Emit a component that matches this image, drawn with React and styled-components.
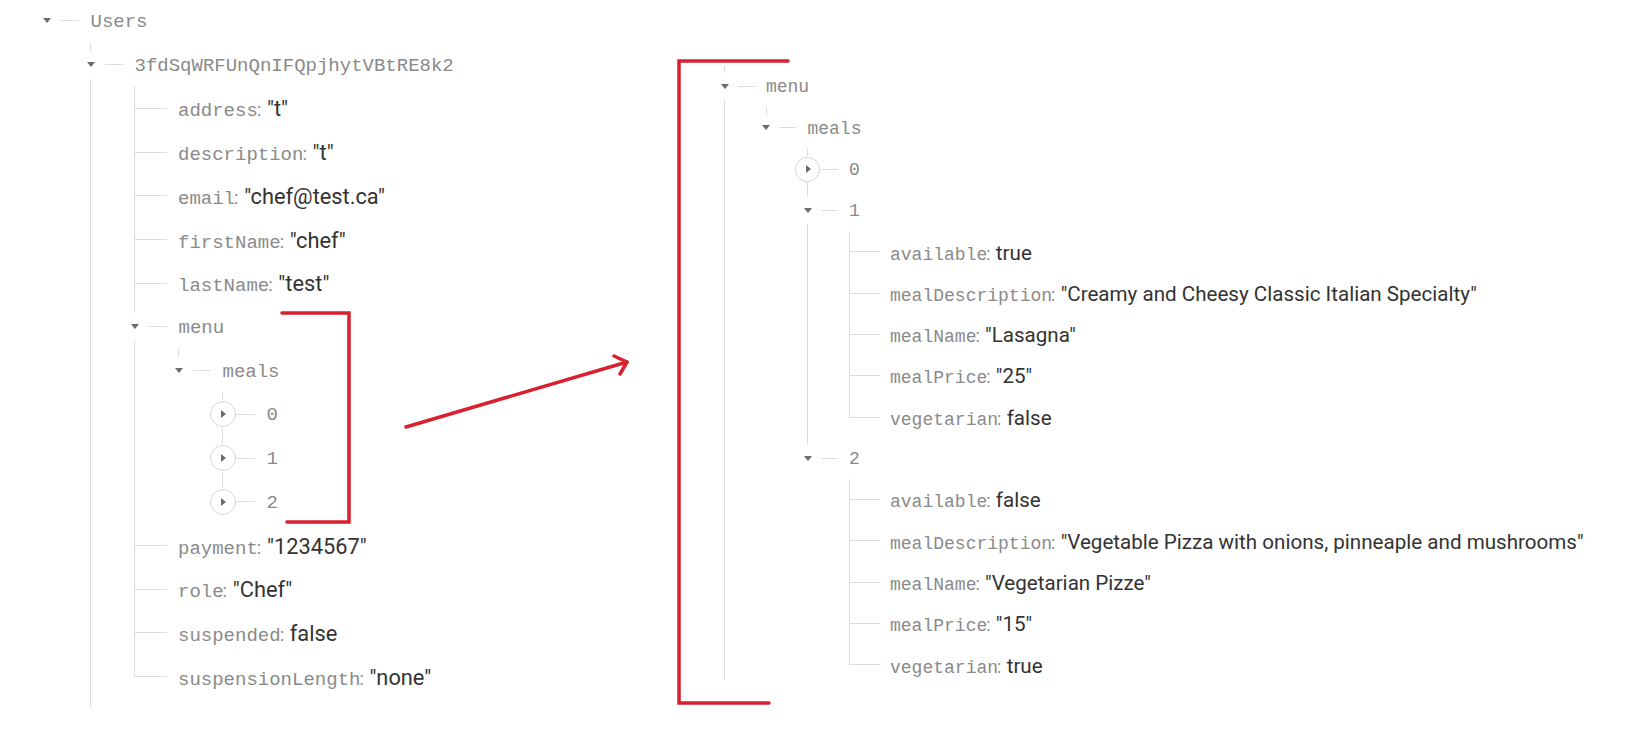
import React from "react";
import styled, { createGlobalStyle, ThemeProvider } from "styled-components";

const GlobalStyle = createGlobalStyle`
  html, body {
    margin: 0;
    padding: 0;
    background: #fff;
  }
  body {
    font-family: Roboto, "Liberation Sans", sans-serif;
  }
`;

// sizes of one tree; the right one is the same tree drawn a little smaller
const leftSize = {
  row: 43.73,
  step: 44,
  box: 28,
  dash: 19,
  gap: 12,
  leaf: 33,
  leafGap: 11,
  circle: 26,
  key: 19,
  value: 21.8,
};

const shrink = (size, s) =>
  Object.fromEntries(Object.entries(size).map(([k, v]) => [k, v * s]));

const rightSize = { ...shrink(leftSize, 0.944), row: 41.3, step: 41.5, key: 18, value: 20.6 };

const LINE = "#dcdcdc";

const leaf = (k, v) => ({ k, v });
const closed = (k) => ({ k, closed: true });
const meal = (available, desc, name, price, veg) => [
  leaf("available", available),
  leaf("mealDescription", `"${desc}"`),
  leaf("mealName", `"${name}"`),
  leaf("mealPrice", `"${price}"`),
  leaf("vegetarian", veg),
];

const users = {
  k: "Users",
  children: [
    {
      k: "3fdSqWRFUnQnIFQpjhytVBtRE8k2",
      more: true,
      tail: 8,
      children: [
        leaf("address", '"t"'),
        leaf("description", '"t"'),
        leaf("email", '"chef@test.ca"'),
        leaf("firstName", '"chef"'),
        leaf("lastName", '"test"'),
        {
          k: "menu",
          children: [{ k: "meals", children: [closed("0"), closed("1"), closed("2")] }],
        },
        leaf("payment", '"1234567"'),
        leaf("role", '"Chef"'),
        leaf("suspended", "false"),
        leaf("suspensionLength", '"none"'),
      ],
    },
  ],
};

const menu = {
  k: "menu",
  more: true,
  tail: -5,
  children: [
    {
      k: "meals",
      children: [
        closed("0"),
        {
          k: "1",
          children: meal("true", "Creamy and Cheesy Classic Italian Specialty", "Lasagna", "25", "false"),
        },
        {
          k: "2",
          children: meal(
            "false",
            "Vegetable Pizza with onions, pinneaple and mushrooms",
            "Vegetarian Pizze",
            "15",
            "true"
          ),
        },
      ],
    },
  ],
};

const Label = ({ node }) => (
  <Text>
    <Key>{node.k}</Key>
    {node.v !== undefined && (
      <>
        <Colon>:</Colon>
        <Value>{node.v}</Value>
      </>
    )}
  </Text>
);

const Node = ({ node, last, root }) => {
  const isLeaf = node.v !== undefined;

  return (
    <Item $root={root} $last={last && !node.more} $tail={node.tail || 0}>
      {isLeaf ? (
        <LeafRow>
          <LeafLine />
          <Label node={node} />
        </LeafRow>
      ) : (
        <Row>
          <GlyphBox>
            {node.closed ? (
              <Circle>
                <RightCaret />
              </Circle>
            ) : (
              <DownCaret />
            )}
          </GlyphBox>
          <Dash />
          <Label node={node} />
        </Row>
      )}
      {node.children && (
        <Children>
          {node.children.map((child, idx) => (
            <Node key={child.k} node={child} last={idx === node.children.length - 1} />
          ))}
        </Children>
      )}
    </Item>
  );
};

const App = () => {
  return (
    <>
      <GlobalStyle />
      <Page>
        <LeftPane>
          <ThemeProvider theme={leftSize}>
            <Tree>
              <Node node={users} root />
            </Tree>
          </ThemeProvider>
        </LeftPane>
        <RightPane>
          <ThemeProvider theme={rightSize}>
            <Tree>
              <Node node={menu} />
            </Tree>
          </ThemeProvider>
        </RightPane>

        <Marks viewBox="0 0 1627 748" width="1627" height="748">
          <g fill="none" stroke="#d8202e" strokeWidth="3.5" strokeLinecap="round" strokeLinejoin="miter">
            <path d="M282 313 H349 V522 H287" />
            <path d="M788 61 H679 V703 H769" />
            <path d="M406 427 L627 362" />
            <path d="M614 356 L627 362 L620 374" strokeLinejoin="round" />
          </g>
        </Marks>
      </Page>
    </>
  );
};

const Page = styled.div`
  position: relative;
  width: 1627px;
  height: 748px;
  overflow: hidden;
  display: flex;
  align-items: flex-start;
  background: #fff;
`;

const LeftPane = styled.div`
  width: 724px;
  box-sizing: border-box;
  padding-left: 46px;
  margin-top: -1px;
  flex: none;
`;

const RightPane = styled.div`
  padding-top: 66px;
`;

const Marks = styled.svg`
  position: absolute;
  left: 0;
  top: 0;
  pointer-events: none;
`;

const Tree = styled.ul`
  list-style: none;
  margin: 0;
  padding: 0;
`;

const Children = styled.ul`
  list-style: none;
  margin: 0 0 0 ${(p) => p.theme.step}px;
  padding: 0;
`;

const Item = styled.li`
  position: relative;

  &::before {
    content: "";
    display: ${(p) => (p.$root ? "none" : "block")};
    position: absolute;
    left: 0;
    top: 0;
    width: 1px;
    background: ${LINE};
    ${(p) => (p.$last ? `height: ${p.theme.row / 2}px;` : `bottom: ${-p.$tail}px;`)}
  }
`;

const Row = styled.div`
  display: flex;
  align-items: center;
  height: ${(p) => p.theme.row}px;
  margin-left: ${(p) => -p.theme.box / 2 + 0.5}px;
`;

const LeafRow = styled.div`
  display: flex;
  align-items: center;
  height: ${(p) => p.theme.row}px;

  & > span {
    margin-left: ${(p) => p.theme.leafGap}px;
  }
`;

const GlyphBox = styled.div`
  position: relative;
  z-index: 1;
  flex: none;
  display: flex;
  align-items: center;
  justify-content: center;
  width: ${(p) => p.theme.box}px;
  height: ${(p) => p.theme.box}px;
  background: #fff;
`;

const DownCaret = styled.div`
  width: 0;
  height: 0;
  border-left: 4.5px solid transparent;
  border-right: 4.5px solid transparent;
  border-top: 5px solid #6b6b6b;
`;

const Circle = styled.div`
  display: flex;
  align-items: center;
  justify-content: center;
  box-sizing: border-box;
  width: ${(p) => p.theme.circle}px;
  height: ${(p) => p.theme.circle}px;
  border: 1px solid #d6d6d6;
  border-radius: 50%;
  background: #fff;
`;

const RightCaret = styled.div`
  width: 0;
  height: 0;
  margin-left: 2px;
  border-top: 4.5px solid transparent;
  border-bottom: 4.5px solid transparent;
  border-left: 5px solid #6b6b6b;
`;

const Dash = styled.div`
  flex: none;
  width: ${(p) => p.theme.dash}px;
  height: 1px;
  margin-left: -1px;
  background: ${LINE};

  & + span {
    margin-left: ${(p) => p.theme.gap}px;
  }
`;

const LeafLine = styled.div`
  flex: none;
  width: ${(p) => p.theme.leaf}px;
  height: 1px;
  background: ${LINE};
`;

const Text = styled.span`
  display: flex;
  align-items: baseline;
  white-space: nowrap;
  line-height: 1.2;
  padding-top: 3px;
`;

const Key = styled.span`
  font-family: "Liberation Mono", "DejaVu Sans Mono", monospace;
  font-size: ${(p) => p.theme.key}px;
  color: #8a8a8a;
`;

const Colon = styled.span`
  font-family: Roboto, "Liberation Sans", sans-serif;
  font-size: ${(p) => p.theme.value * 0.85}px;
  color: #8a8a8a;
  margin-left: -1px;
  margin-right: ${(p) => p.theme.value * 0.26}px;
`;

const Value = styled.span`
  font-family: Roboto, "Liberation Sans", sans-serif;
  font-size: ${(p) => p.theme.value}px;
  color: #333;
`;

export default App;
